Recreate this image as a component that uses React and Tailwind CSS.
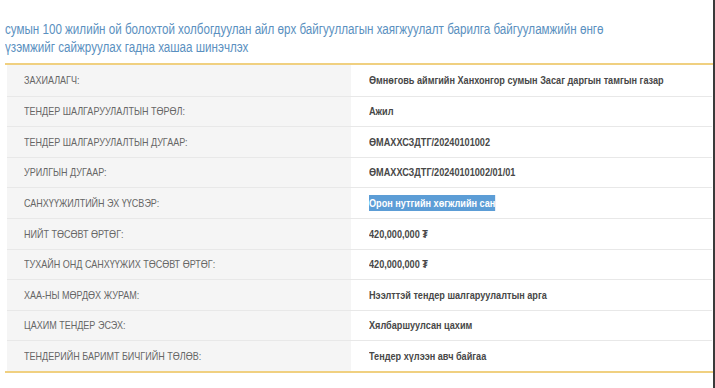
export default function App() {
  const rows = [
    ["ЗАХИАЛАГЧ:", "Өмнөговь аймгийн Ханхонгор сумын Засаг даргын тамгын газар"],
    ["ТЕНДЕР ШАЛГАРУУЛАЛТЫН ТӨРӨЛ:", "Ажил"],
    ["ТЕНДЕР ШАЛГАРУУЛАЛТЫН ДУГААР:", "ӨМАХХСЗДТГ/20240101002"],
    ["УРИЛГЫН ДУГААР:", "ӨМАХХСЗДТГ/20240101002/01/01"],
    ["САНХҮҮЖИЛТИЙН ЭХ ҮҮСВЭР:", "Орон нутгийн хөгжлийн сан", true],
    ["НИЙТ ТӨСӨВТ ӨРТӨГ:", "420,000,000 ₮"],
    ["ТУХАЙН ОНД САНХҮҮЖИХ ТӨСӨВТ ӨРТӨГ:", "420,000,000 ₮"],
    ["ХАА-НЫ МӨРДӨХ ЖУРАМ:", "Нээлттэй тендер шалгаруулалтын арга"],
    ["ЦАХИМ ТЕНДЕР ЭСЭХ:", "Хялбаршуулсан цахим"],
    ["ТЕНДЕРИЙН БАРИМТ БИЧГИЙН ТӨЛӨВ:", "Тендер хүлээн авч байгаа"],
  ];
  return (
    <div className="w-[715px] h-[388px] bg-white overflow-hidden relative font-['Liberation_Sans',Arial,sans-serif]">
      <div className="absolute right-0 top-0 w-[2px] h-full bg-[#3a3a3a]" />
      <div className="pt-[20px] pl-[5px]">
        <div className="w-[775px] origin-left scale-x-[0.83] text-[14px] leading-[18px] text-[#5a90c0]">
          сумын 100 жилийн ой болохтой холбогдуулан айл өрх байгууллагын хаягжуулалт барилга байгууламжийн өнгө үзэмжийг сайжруулах гадна хашаа шинэчлэх
        </div>
      </div>
      <div className="mt-[7px] ml-[5px] mr-[2px] border-t-2 border-b-2 border-[#f0d080]">
        <div className="ml-[2px] mr-[1px]">
          {rows.map(([k, v, sel], i) => (
            <div key={i} className={"flex h-[30.6px] " + (i > 0 ? "border-t border-[#e8e8e8]" : "")}>
              <div className="w-[344px] shrink-0 bg-[#f5f5f5] pl-[17px] flex items-center text-[11px] text-[#666] whitespace-nowrap">
                <span className="inline-block origin-left scale-x-[0.82]">{k}</span>
              </div>
              <div className="flex-1 pl-[18px] flex items-center text-[11px] font-bold text-[#474747] whitespace-nowrap">
                <span className={"inline-block origin-left scale-x-[0.83] " + (sel ? "bg-[#5c9dd6] text-white" : "")}>{v}</span>
              </div>
            </div>
          ))}
        </div>
      </div>
    </div>
  );
}
